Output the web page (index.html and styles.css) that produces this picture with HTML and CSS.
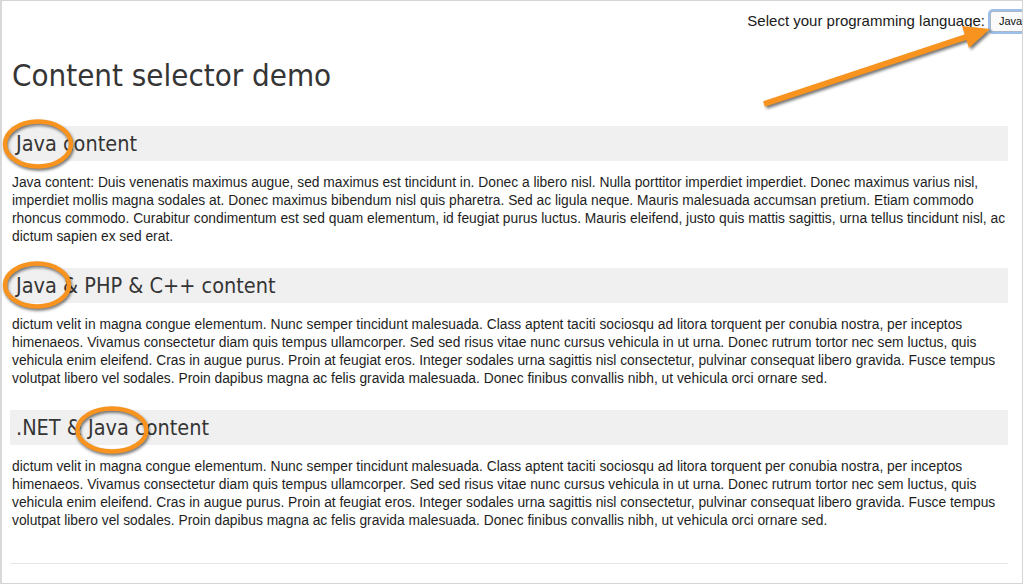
FILE: index.html
```html
<!DOCTYPE html>
<html lang="en">
<head>
<meta charset="utf-8">
<title>Content selector demo</title>
<link rel="stylesheet" href="styles.css">
</head>
<body>
<div class="frame">
  <div class="topbar">
    <label class="lang-label" for="lang">Select your programming language:</label>
    <select id="lang" class="lang-select">
      <option>Java</option>
      <option>PHP</option>
      <option>C++</option>
      <option>.NET</option>
    </select>
  </div>
  <main class="content">
    <h1 class="title">Content selector demo</h1>

    <section class="block">
      <h2 class="block-head">Java content</h2>
      <p class="block-text">Java content: Duis venenatis maximus augue, sed maximus est tincidunt in. Donec a libero nisl. Nulla porttitor imperdiet imperdiet. Donec maximus varius nisl, imperdiet mollis magna sodales at. Donec maximus bibendum nisl quis pharetra. Sed ac ligula neque. Mauris malesuada accumsan pretium. Etiam commodo rhoncus commodo. Curabitur condimentum est sed quam elementum, id feugiat purus luctus. Mauris eleifend, justo quis mattis sagittis, urna tellus tincidunt nisl, ac dictum sapien ex sed erat.</p>
    </section>

    <section class="block">
      <h2 class="block-head">Java &amp; PHP &amp; C++ content</h2>
      <p class="block-text">dictum velit in magna congue elementum. Nunc semper tincidunt malesuada. Class aptent taciti sociosqu ad litora torquent per conubia nostra, per inceptos himenaeos. Vivamus consectetur diam quis tempus ullamcorper. Sed sed risus vitae nunc cursus vehicula in ut urna. Donec rutrum tortor nec sem luctus, quis vehicula enim eleifend. Cras in augue purus. Proin at feugiat eros. Integer sodales urna sagittis nisl consectetur, pulvinar consequat libero gravida. Fusce tempus volutpat libero vel sodales. Proin dapibus magna ac felis gravida malesuada. Donec finibus convallis nibh, ut vehicula orci ornare sed.</p>
    </section>

    <section class="block">
      <h2 class="block-head">.NET &amp; Java content</h2>
      <p class="block-text">dictum velit in magna congue elementum. Nunc semper tincidunt malesuada. Class aptent taciti sociosqu ad litora torquent per conubia nostra, per inceptos himenaeos. Vivamus consectetur diam quis tempus ullamcorper. Sed sed risus vitae nunc cursus vehicula in ut urna. Donec rutrum tortor nec sem luctus, quis vehicula enim eleifend. Cras in augue purus. Proin at feugiat eros. Integer sodales urna sagittis nisl consectetur, pulvinar consequat libero gravida. Fusce tempus volutpat libero vel sodales. Proin dapibus magna ac felis gravida malesuada. Donec finibus convallis nibh, ut vehicula orci ornare sed.</p>
    </section>

    <hr class="rule">
  </main>

  <svg class="annotations" width="1024" height="585" viewBox="0 0 1024 585" aria-hidden="true">
    <g class="marks">
      <ellipse cx="38" cy="144" rx="33" ry="22.5"/>
      <ellipse cx="37" cy="285" rx="32" ry="21.5"/>
      <ellipse cx="112" cy="430" rx="34.5" ry="21.5"/>
    </g>
    <g class="arrow">
      <line x1="764" y1="104" x2="966" y2="37"/>
      <polygon points="990,29 962,26 969,48"/>
    </g>
  </svg>
</div>
</body>
</html>
```

FILE: styles.css
```css
html, body {
  margin: 0;
  padding: 0;
  background: #ffffff;
}

.frame {
  position: relative;
  box-sizing: border-box;
  width: 1023px;
  height: 584px;
  border-top: 1px solid #d4d4d4;
  border-left: 2px solid #d8d8d8;
  border-right: 1px solid #d4d4d4;
  border-bottom: 1px solid #d4d4d4;
  overflow: hidden;
  font-family: "Liberation Sans", Arial, sans-serif;
}

.topbar {
  display: flex;
  justify-content: flex-end;
  align-items: center;
  gap: 5px;
  height: 20px;
  padding-top: 10px;
  margin-right: -20px;
}

.lang-label {
  font-size: 15px;
  color: #1a1a1a;
  line-height: 20px;
}

.lang-select {
  -webkit-appearance: none;
  appearance: none;
  width: 52px;
  height: 21px;
  box-sizing: border-box;
  padding: 0 0 0 8px;
  font-family: "Liberation Sans", Arial, sans-serif;
  font-size: 11px;
  color: #111;
  background: #fafafa;
  border: 1px solid #a9b7c9;
  border-radius: 3px;
  box-shadow: 0 0 0 2px #9cc0ea;
}

.content {
  padding: 0 14px 0 8px;
}

.title {
  margin: 26px 0 33px 2px;
  font-family: "DejaVu Sans Condensed", "DejaVu Sans", sans-serif;
  font-weight: normal;
  font-size: 31px;
  line-height: 36px;
  color: #353535;
}

.block {
  margin: 0 0 22px 0;
}

.block-head {
  margin: 0;
  height: 35px;
  padding-left: 6px;
  background: #f0f0f0;
  font-family: "DejaVu Sans Condensed", "DejaVu Sans", sans-serif;
  font-weight: normal;
  font-size: 21.5px;
  line-height: 35px;
  color: #353535;
}

.block-text {
  margin: 13px 0 0 2px;
  font-size: 13.8px;
  line-height: 18px;
  color: #1e1e1e;
}

.rule {
  margin: 33px 0 0 0;
  border: 0;
  border-top: 1px solid #e6e6e6;
  height: 0;
}

.annotations {
  position: absolute;
  left: -2px;
  top: -1px;
  pointer-events: none;
}

.marks ellipse {
  fill: none;
  stroke: #f7931e;
  stroke-width: 4.5;
  filter: drop-shadow(1.5px 2px 1.5px rgba(0, 0, 0, 0.55));
}

.arrow {
  filter: drop-shadow(2px 2px 1.5px rgba(0, 0, 0, 0.55));
}

.arrow line {
  stroke: #f7931e;
  stroke-width: 6;
}

.arrow polygon {
  fill: #f7931e;
}
```
